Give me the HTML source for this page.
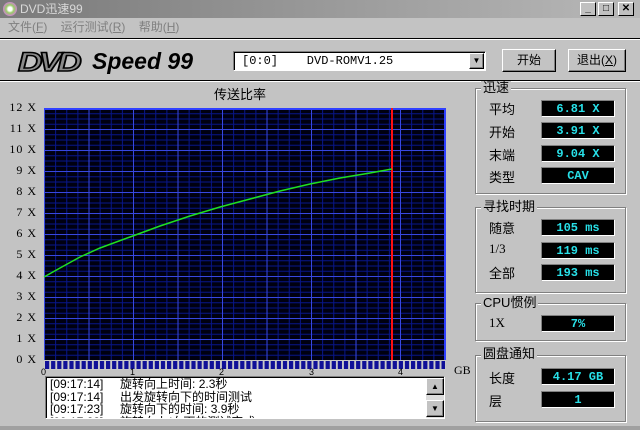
<!DOCTYPE html>
<html><head><meta charset="utf-8"><style>
*{margin:0;padding:0;box-sizing:border-box}
body{width:640px;height:430px;background:#c3c3c3;font-family:"Liberation Sans","Noto Sans CJK SC",sans-serif;font-size:12px;color:#000;position:relative;overflow:hidden}
.a{position:absolute}
.title{left:0;top:0;width:640px;height:18px;background:linear-gradient(90deg,#7a7a7a,#b8b8b8);color:#d8d8d8;font-size:12px;line-height:18px;padding-left:20px}
.tb{width:16px;height:14px;top:2px;background:#c0c0c0;border:1px solid;border-color:#fff #000 #000 #fff;font-size:10px;line-height:12px;text-align:center;font-weight:bold}
.menu{top:19px;left:8px;color:#808080;font-size:12px;line-height:16px}
.btn{background:#c3c3c3;border:1px solid;border-color:#fff #000 #000 #fff;box-shadow:inset -1px -1px #808080;text-align:center;font-size:12px}
.grp{border:1px solid #808080;box-shadow:1px 1px #fff, inset 1px 1px #fff}
.gl{background:#c3c3c3;padding:0 2px;font-size:13px;line-height:14px}
.val{background:#000;color:#28e0e8;font-family:"Liberation Mono",monospace;font-weight:bold;font-size:12px;text-align:center;line-height:17px;height:17px;border:1px solid;border-color:#808080 #fff #fff #808080}
.lbl{font-size:13px}
.yl{font-family:"Liberation Serif",serif;font-size:12px;width:37px;text-align:right;letter-spacing:1px}
</style></head><body>
<div class="a title">DVD迅速99</div>
<div class="a" style="left:3px;top:2px;width:14px;height:14px;border-radius:50%;background:radial-gradient(#fff 20%,#9c6 40%,#c8c 70%,#888)"></div>
<div class="a tb" style="left:580px">_</div>
<div class="a tb" style="left:598px">□</div>
<div class="a tb" style="left:618px">✕</div>
<div class="a menu">文件(<u>F</u>)&nbsp;&nbsp;&nbsp;&nbsp;运行测试(<u>R</u>)&nbsp;&nbsp;&nbsp;&nbsp;帮助(<u>H</u>)</div>
<div class="a" style="left:0;top:38px;width:640px;height:2px;background:#000;border-bottom:1px solid #fff"></div>
<div class="a" style="left:18px;top:47px;font:italic 900 27px 'Liberation Sans',sans-serif;color:#8a8a8a;-webkit-text-stroke:1.5px #000;letter-spacing:-3px;transform:scaleX(1.25);transform-origin:left">DVD</div>
<div class="a" style="left:92px;top:48px;font:italic bold 23px 'Liberation Sans',sans-serif;color:#000">Speed 99</div>
<div class="a" style="left:233px;top:51px;width:253px;height:20px;background:#fff;border:1px solid;border-color:#808080 #fff #fff #808080;box-shadow:inset 1px 1px #000;font-family:'Liberation Mono',monospace;font-size:12px;line-height:18px;padding-left:8px;white-space:pre">[0:0]    DVD-ROMV1.25</div>
<div class="a btn" style="left:469px;top:53px;width:15px;height:16px;font-size:8px;line-height:14px">▼</div>
<div class="a btn" style="left:502px;top:49px;width:54px;height:23px;line-height:21px">开始</div>
<div class="a btn" style="left:568px;top:49px;width:58px;height:23px;line-height:21px">退出(<u>X</u>)</div>
<div class="a" style="left:0;top:80px;width:640px;height:2px;background:#000;border-bottom:1px solid #fff"></div>
<div class="a" style="left:214px;top:84px;font-size:13px">传送比率</div>
<div class="a yl" style="left:0;top:100px">12 X</div><div class="a yl" style="left:0;top:121px">11 X</div>
<div class="a yl" style="left:0;top:142px">10 X</div><div class="a yl" style="left:0;top:163px">9 X</div>
<div class="a yl" style="left:0;top:184px">8 X</div><div class="a yl" style="left:0;top:205px">7 X</div>
<div class="a yl" style="left:0;top:226px">6 X</div><div class="a yl" style="left:0;top:247px">5 X</div>
<div class="a yl" style="left:0;top:268px">4 X</div><div class="a yl" style="left:0;top:289px">3 X</div>
<div class="a yl" style="left:0;top:310px">2 X</div><div class="a yl" style="left:0;top:331px">1 X</div>
<div class="a yl" style="left:0;top:352px">0 X</div>
<svg class="a" style="left:40px;top:106px" width="410" height="264">
<defs>
<pattern id="mv" x="4" y="0" width="11.125" height="264" patternUnits="userSpaceOnUse"><rect x="0" width="1" height="264" fill="#08168a"/></pattern>
<pattern id="mh" x="0" y="2" width="410" height="5.25" patternUnits="userSpaceOnUse"><rect y="0" width="410" height="1" fill="#08168a"/></pattern>
<pattern id="Mv" x="4" y="0" width="44.5" height="264" patternUnits="userSpaceOnUse"><rect x="0" width="1" height="264" fill="#3848e0"/></pattern>
<pattern id="Mh" x="0" y="2" width="410" height="21" patternUnits="userSpaceOnUse"><rect y="0" width="410" height="1" fill="#3848e0"/></pattern>
<pattern id="pb" x="5" y="0" width="6.1" height="12" patternUnits="userSpaceOnUse"><rect width="4.2" height="12" fill="#101098"/></pattern>
</defs>
<rect x="4" y="2" width="402" height="252" fill="#000010"/>
<rect x="4" y="2" width="402" height="252" fill="url(#mv)"/>
<rect x="4" y="2" width="402" height="252" fill="url(#mh)"/>
<rect x="4" y="2" width="402" height="252" fill="url(#Mv)"/>
<rect x="4" y="2" width="402" height="252" fill="url(#Mh)"/>
<rect x="4" y="2" width="402" height="2" fill="#3040ff"/>
<rect x="404" y="2" width="2" height="252" fill="#3040ff"/>
<rect x="351" y="2" width="2" height="252" fill="#ff1010"/>
<polyline fill="none" stroke="#20e020" stroke-width="1.5" points="4,171 20,162 40,151 60,142 90,131 120,120 150,110 180,101 210,93 240,85 270,78 300,72 330,67 352,63"/>
<rect x="4" y="254" width="402" height="10" fill="#c8c8c8"/>
<rect x="5" y="255" width="400" height="8" fill="url(#pb)"/>
</svg>
<div class="a" style="left:41px;top:367px;font-size:9px;width:400px;height:8px"><span class="a" style="left:0">0</span><span class="a" style="left:89px">1</span><span class="a" style="left:178px">2</span><span class="a" style="left:268px">3</span><span class="a" style="left:357px">4</span></div>
<div class="a" style="left:454px;top:363px;font-family:'Liberation Serif',serif;font-size:12px">GB</div>
<div class="a" style="left:45px;top:376px;width:400px;height:43px;background:#fff;border:1px solid;border-color:#808080 #fff #fff #808080;box-shadow:inset 1px 1px #000;overflow:hidden;font-size:12px;line-height:12.5px;padding:1px 0 0 4px;white-space:pre">[09:17:14]     旋转向上时间: 2.3秒
[09:17:14]     出发旋转向下的时间测试
[09:17:23]     旋转向下的时间: 3.9秒
[09:17:23]     旋转向上/向下的测试完成</div>
<div class="a" style="left:426px;top:378px;width:18px;height:40px;background:#ddd"></div>
<div class="a btn" style="left:426px;top:378px;width:18px;height:17px;font-size:8px;line-height:15px">▲</div>
<div class="a btn" style="left:426px;top:400px;width:18px;height:17px;font-size:8px;line-height:15px">▼</div>

<div class="a grp" style="left:475px;top:88px;width:151px;height:106px"></div>
<div class="a gl" style="left:481px;top:81px">迅速</div>
<div class="a lbl" style="left:489px;top:99px">平均</div><div class="a val" style="left:541px;top:100px;width:74px">6.81 X</div>
<div class="a lbl" style="left:489px;top:122px">开始</div><div class="a val" style="left:541px;top:122px;width:74px">3.91 X</div>
<div class="a lbl" style="left:489px;top:145px">末端</div><div class="a val" style="left:541px;top:145px;width:74px">9.04 X</div>
<div class="a lbl" style="left:489px;top:167px">类型</div><div class="a val" style="left:541px;top:167px;width:74px">CAV</div>

<div class="a grp" style="left:475px;top:207px;width:151px;height:86px"></div>
<div class="a gl" style="left:481px;top:200px">寻找时期</div>
<div class="a lbl" style="left:489px;top:218px">随意</div><div class="a val" style="left:541px;top:219px;width:74px">105 ms</div>
<div class="a lbl" style="left:489px;top:241px;font-family:'Liberation Serif',serif">1/3</div><div class="a val" style="left:541px;top:242px;width:74px">119 ms</div>
<div class="a lbl" style="left:489px;top:263px">全部</div><div class="a val" style="left:541px;top:264px;width:74px">193 ms</div>

<div class="a grp" style="left:475px;top:303px;width:151px;height:38px"></div>
<div class="a gl" style="left:481px;top:296px">CPU惯例</div>
<div class="a lbl" style="left:489px;top:315px;font-family:'Liberation Serif',serif">1X</div><div class="a val" style="left:541px;top:315px;width:74px">7%</div>

<div class="a grp" style="left:475px;top:355px;width:151px;height:67px"></div>
<div class="a gl" style="left:481px;top:347px">圆盘通知</div>
<div class="a lbl" style="left:489px;top:368px">长度</div><div class="a val" style="left:541px;top:368px;width:74px">4.17 GB</div>
<div class="a lbl" style="left:489px;top:391px">层</div><div class="a val" style="left:541px;top:391px;width:74px">1</div>
<div class="a" style="left:0;top:426px;width:640px;height:4px;background:#a0a0a0"></div>
</body></html>
